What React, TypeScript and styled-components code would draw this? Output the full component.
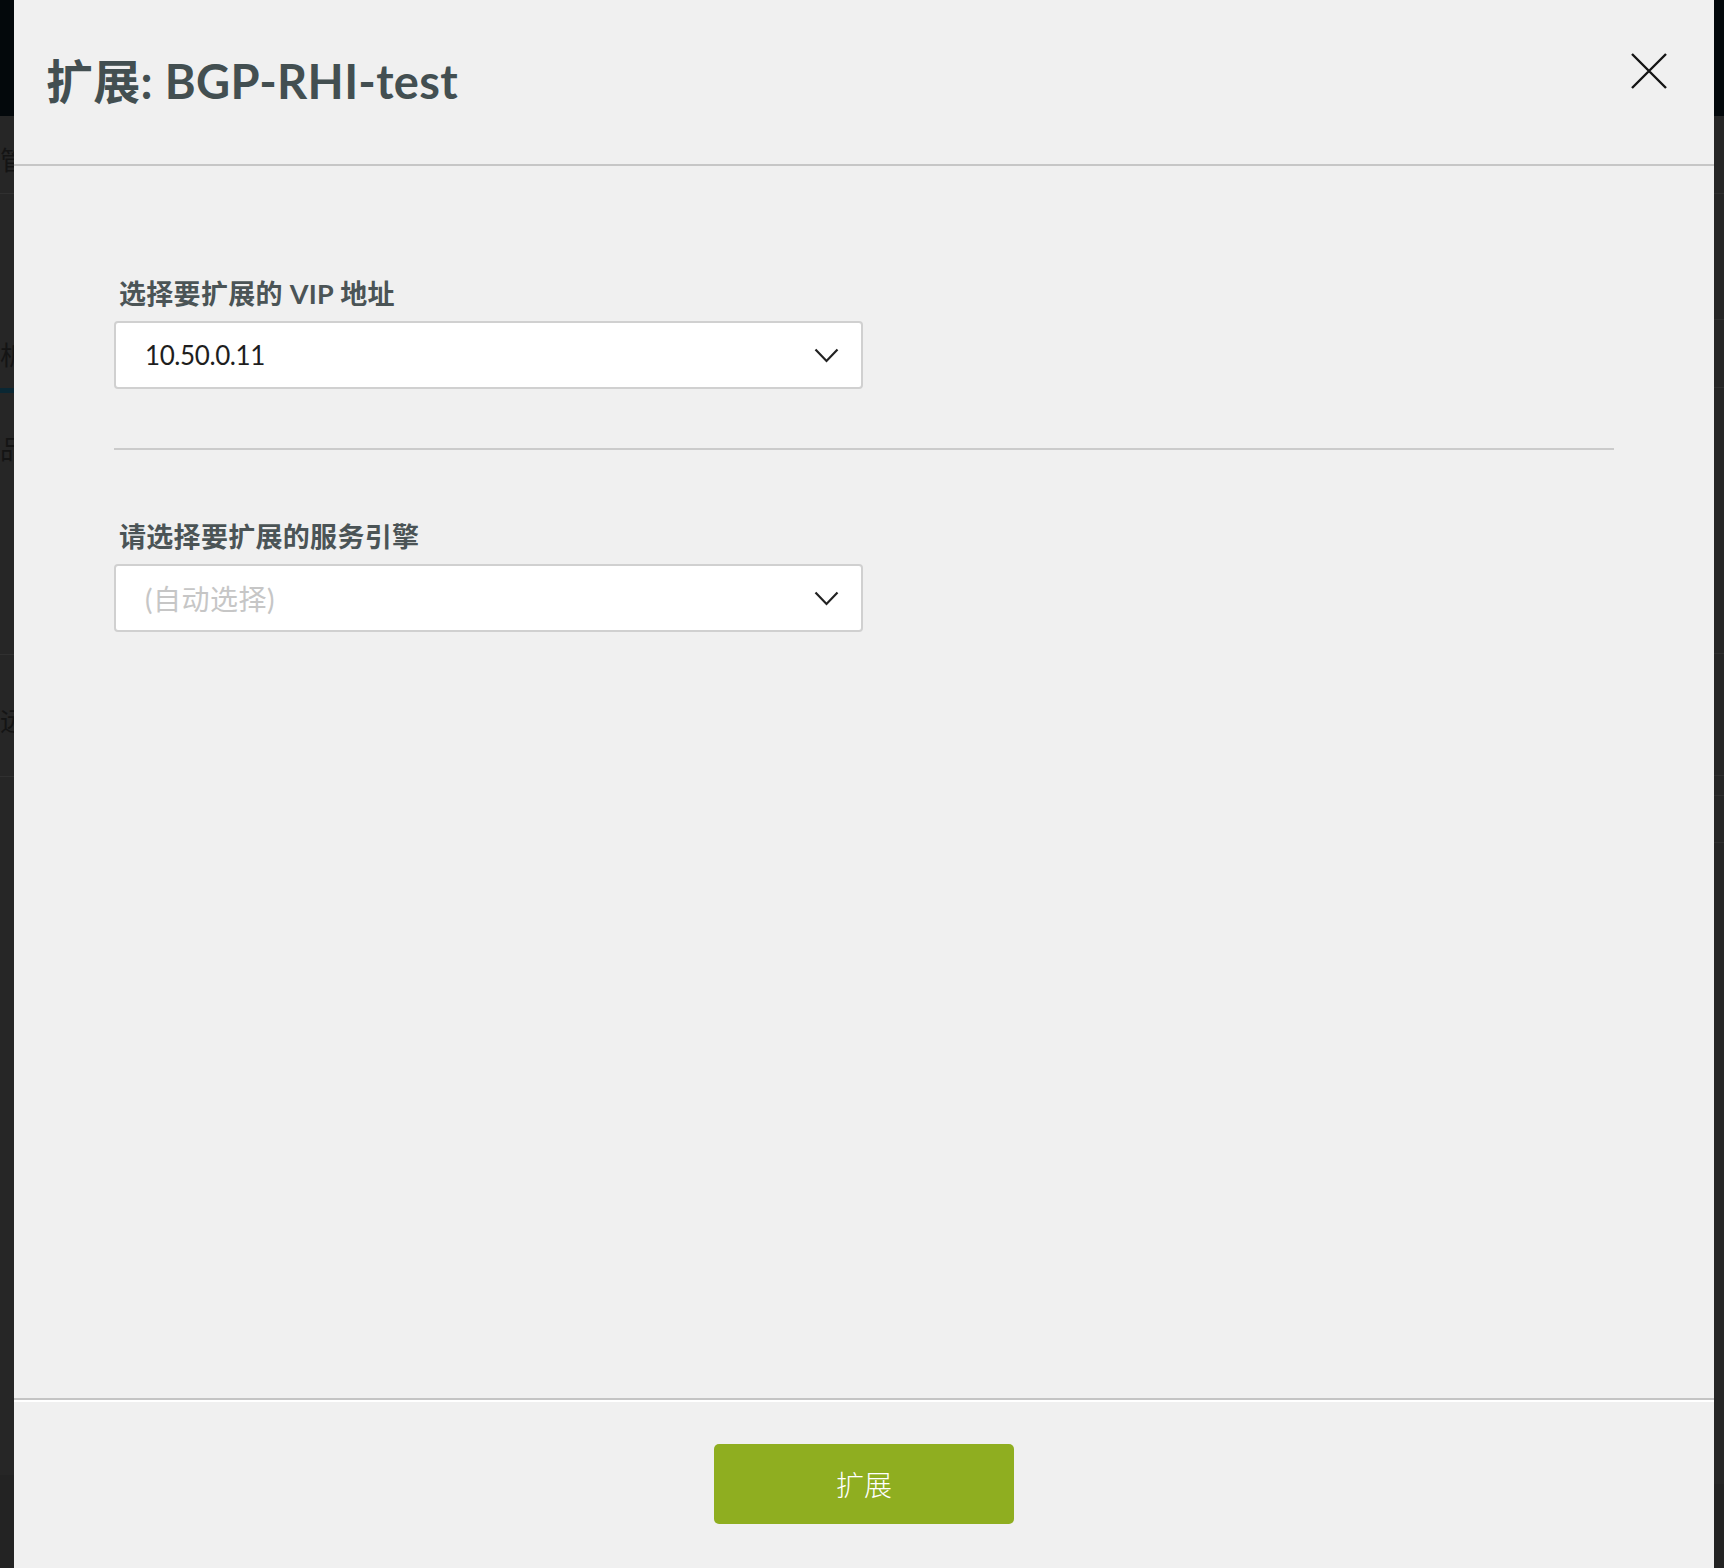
import React from 'react'
import styled, { createGlobalStyle } from 'styled-components'

//// global
const GlobalStyle = createGlobalStyle`
  html, body {
    margin: 0;
    padding: 0;
    background: #262626;
  }
  * {
    box-sizing: border-box;
  }
`

const FONT = `Lato, "Noto Sans CJK SC", "Noto Sans", sans-serif`

//// backdrop
const Page = styled.div`
  display: flex;
  width: 1724px;
  height: 1568px;
  overflow: hidden;
  font-family: ${FONT};
`

const Strip = styled.div<{ $width: number; $align: 'left' | 'right' }>`
  flex: 0 0 ${p => p.$width}px;
  display: flex;
  flex-direction: column;
  overflow: hidden;
  background: #262626;
  text-align: ${p => (p.$align === 'left' ? 'right' : 'left')};
`

const StripBlock = styled.div<{ $h: number; $bg?: string; $line?: string }>`
  flex: 0 0 ${p => p.$h}px;
  background: ${p => p.$bg || 'transparent'};
  border-bottom: ${p => (p.$line ? `1px solid ${p.$line}` : 'none')};
  display: flex;
  flex-direction: column;
  justify-content: flex-end;
  overflow: hidden;
`

const GhostText = styled.div<{ $pad: number }>`
  color: #141414;
  font-size: 26px;
  line-height: 30px;
  white-space: nowrap;
  padding-bottom: ${p => p.$pad}px;
  margin: 0 -12px;
`

const StripFill = styled.div<{ $bg?: string }>`
  flex: 1 1 auto;
  background: ${p => p.$bg || 'transparent'};
`

//// modal
const Modal = styled.div`
  flex: 0 0 1700px;
  display: flex;
  flex-direction: column;
  background: #f0f0f0;
`

const Header = styled.div`
  flex: 0 0 166px;
  display: flex;
  align-items: center;
  justify-content: space-between;
  padding: 0 47px 8px 32px;
  border-bottom: 2px solid #c6c6c6;
`

const Title = styled.h1`
  margin: 0;
  font-size: 47px;
  font-weight: 700;
  color: #434f51;
  letter-spacing: 0.3px;
`

const CloseButton = styled.button`
  align-self: flex-start;
  margin-top: 53px;
  width: 36px;
  height: 36px;
  padding: 0;
  border: none;
  background: none;
  cursor: pointer;
`

const Body = styled.div`
  flex: 1 1 auto;
  display: flex;
  flex-direction: column;
  padding: 110px 100px 0 100px;
`

const Field = styled.div`
  display: flex;
  flex-direction: column;
  gap: 9px;
`

const Label = styled.label`
  padding-left: 5px;
  font-size: 27px;
  line-height: 36px;
  font-weight: 700;
  color: #4b5456;
  letter-spacing: 0.3px;
`

const Select = styled.div`
  width: 749px;
  height: 68px;
  display: flex;
  align-items: center;
  justify-content: space-between;
  padding: 0 22px 0 29px;
  background: #ffffff;
  border: 2px solid #d0d0d0;
  border-radius: 4px;
`

const SelectValue = styled.span<{ $placeholder?: boolean }>`
  font-size: ${p => (p.$placeholder ? 28 : 26)}px;
  color: ${p => (p.$placeholder ? '#c6c6c6' : '#1e1e1e')};
  letter-spacing: ${p => (p.$placeholder ? 0.5 : -0.4)}px;
`

const Divider = styled.div`
  width: 1500px;
  height: 2px;
  margin: 59px 0 69px;
  background: #cbcbcb;
`

const Footer = styled.div`
  flex: 0 0 170px;
  display: flex;
  justify-content: center;
  align-items: flex-start;
  padding-top: 44px;
  border-top: 2px solid #c4c4c4;
  box-shadow: inset 0 2px 0 #ffffff;
`

const PrimaryButton = styled.button`
  width: 300px;
  height: 80px;
  border: none;
  border-radius: 5px;
  background: #8fae20;
  color: #ffffff;
  font-family: ${FONT};
  font-size: 28px;
  font-weight: 300;
  cursor: pointer;
`

//// icons
const CloseIcon = () => (
  <svg width="36" height="36" viewBox="0 0 36 36">
    <path d="M1 1 L35 35 M35 1 L1 35" stroke="#141414" strokeWidth="2.4" fill="none" />
  </svg>
)

const Chevron = () => (
  <svg width="25" height="15" viewBox="0 0 25 15">
    <polyline points="1.5,1.5 12.5,13 23.5,1.5" stroke="#222" strokeWidth="2.2" fill="none" />
  </svg>
)

//// props
interface SelectFieldProps {
  label: string
  value?: string
  placeholder?: string
}

const SelectField: React.FC<SelectFieldProps> = props => {
  const { label, value, placeholder } = props
  return (
    <Field>
      <Label>{label}</Label>
      <Select>
        {value ? (
          <SelectValue>{value}</SelectValue>
        ) : (
          <SelectValue $placeholder>{placeholder}</SelectValue>
        )}
        <Chevron />
      </Select>
    </Field>
  )
}

const App: React.FC = () => {
  return (
    <>
      <GlobalStyle />
      <Page>
        <Strip $width={14} $align="left">
          <StripBlock $h={116} $bg="#03080b" />
          <StripBlock $h={78} $line="#303030">
            <GhostText $pad={18}>管</GhostText>
          </StripBlock>
          <StripBlock $h={194}>
            <GhostText $pad={18}>析</GhostText>
          </StripBlock>
          <StripBlock $h={5} $bg="#0a2733" />
          <StripBlock $h={262} $line="#303030">
            <GhostText $pad={190}>品</GhostText>
          </StripBlock>
          <StripBlock $h={122} $line="#303030">
            <GhostText $pad={40}>远</GhostText>
          </StripBlock>
          <StripBlock $h={698} />
          <StripFill $bg="#232323" />
        </Strip>

        <Modal>
          <Header>
            <Title>扩展: BGP-RHI-test</Title>
            <CloseButton aria-label="close">
              <CloseIcon />
            </CloseButton>
          </Header>

          <Body>
            <SelectField label="选择要扩展的 VIP 地址" value="10.50.0.11" />
            <Divider />
            <SelectField label="请选择要扩展的服务引擎" placeholder="(自动选择)" />
          </Body>

          <Footer>
            <PrimaryButton>扩展</PrimaryButton>
          </Footer>
        </Modal>

        <Strip $width={10} $align="right">
          <StripBlock $h={116} $bg="#03080b" />
          <StripBlock $h={78} $line="#303030" />
          <StripBlock $h={126} $line="#303030" />
          <StripBlock $h={68} $line="#303030" />
          <StripBlock $h={266} $line="#303030" />
          <StripBlock $h={122} $line="#303030" />
          <StripBlock $h={20} $line="#303030" />
          <StripBlock $h={47} $line="#303030" />
          <StripBlock $h={641} />
          <StripFill $bg="#232323" />
        </Strip>
      </Page>
    </>
  )
}

export default App
